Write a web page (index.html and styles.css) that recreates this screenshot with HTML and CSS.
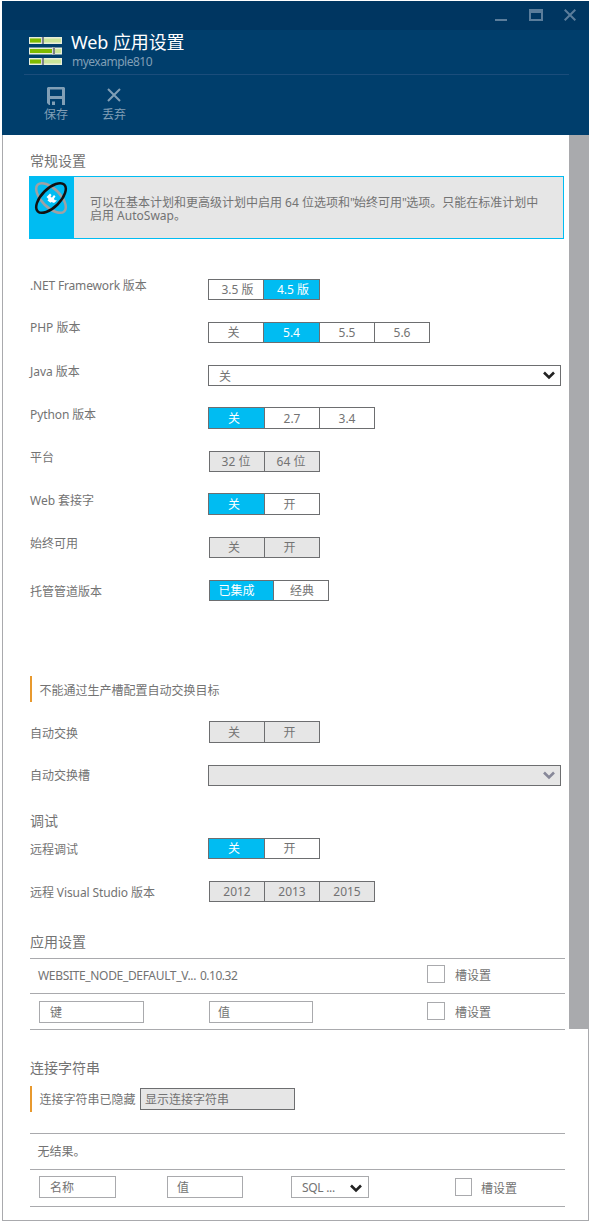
FILE: index.html
```html
<!DOCTYPE html>
<html lang="zh-CN">
<head>
<meta charset="utf-8">
<title>Web 应用设置</title>
<link rel="stylesheet" href="styles.css">
</head>
<body>
<main class="blade">
  <header class="head">
    <div class="titlebar">
      <svg class="winbtn" width="12" height="12" viewBox="0 0 12 12"><path d="M0 10h12v2H0z"/></svg>
      <svg class="winbtn winbtn-max" width="14" height="12" viewBox="0 0 14 12"><path fill-rule="evenodd" d="M0 0h14v12H0zM2 4v6h10V4z"/></svg>
      <svg class="winbtn winbtn-close" width="12" height="12" viewBox="0 0 12 12"><path class="line" d="M.7.7l10.6 10.6M11.3.7L.7 11.3"/></svg>
    </div>
    <div class="heading">
      <svg class="sliders" width="33" height="28" viewBox="0 0 33 28">
        <g fill="#e8eeda"><path d="M0 0h33v7H0zM0 10.500h33v7H0zM0 21h33v7H0z"/></g>
        <g fill="#cbe59a"><path d="M1 1.500h31v4h-31zM1 12h31v4h-31zM1 22.500h31v4h-31z"/></g>
        <g fill="#7fba00"><path d="M1 1.500h11v4h-11zM1 12h22v4h-22zM1 22.500h11v4h-11z"/></g>
        <g fill="#d9dadb"><path d="M12 0h3v7h-3zM23 10.500h3v7h-3zM12 21h3v7h-3z"/></g>
        <g fill="#7c8288"><path d="M13 0h2v7h-2zM24 10.500h2v7h-2zM13 21h2v7h-2z"/></g>
      </svg>
      <div>
        <h1>Web 应用设置</h1>
        <p class="sub">myexample810</p>
      </div>
    </div>
    <nav class="commands">
      <div class="cmd">
        <svg class="save" width="18" height="18" viewBox="0 0 18 18"><path fill-rule="evenodd" d="M1 0h16l1 1v17h-3v-6H3v6H2l-2-2V1zM3 2.500V9h12V2.500z"/><path d="M5 14.500h3V18H5z"/></svg>
        <span>保存</span>
      </div>
      <div class="cmd">
        <svg width="18" height="18" viewBox="0 0 18 18"><path class="line" d="M3 2l12 12M15 2L3 14"/></svg>
        <span>丢弃</span>
      </div>
    </nav>
  </header>

  <div class="body">
    <div class="content">
      <h2 class="h-general">常规设置</h2>
      <div class="banner">
        <div class="banner-icon">
          <svg width="34" height="34" viewBox="0 0 34 34">
            <ellipse class="orbit back" cx="17" cy="17" rx="18.800" ry="9.200" transform="rotate(45 17 17)"/>
            <ellipse class="orbit front" cx="17" cy="17" rx="18.800" ry="9.200" transform="rotate(-45 17 17)"/>
            <path class="core" d="M12.500 16l3.500-3.500 1.500 1.500-1 2 1.500.5 2-2.500 1.500 1.500-1.500 2 .5 1.500 2.500.5-3 2.500-2.500-1-1 .8-3-2.300 1-1.500z"/>
          </svg>
        </div>
        <p>可以在基本计划和更高级计划中启用 64 位选项和<span class="quote">"</span>始终可用<span class="quote">"</span>选项。只能在标准计划中<br>启用 AutoSwap。</p>
      </div>

      <div class="row r-net"><label>.NET Framework 版本</label>
        <div class="seg"><span class="w55 right">3.5 版</span><span class="w56 on right">4.5 版</span></div></div>
      <div class="row r-php"><label>PHP 版本</label>
        <div class="seg"><span class="w55 one">关</span><span class="w56 on">5.4</span><span class="w55">5.5</span><span class="w55">5.6</span></div></div>
      <div class="row r-java"><label>Java 版本</label>
        <div class="select">关<svg class="chev" width="12" height="9" viewBox="0 0 12 9"><path d="M1 1.500l5 5 5-5"/></svg></div></div>
      <div class="row r-python"><label>Python 版本</label>
        <div class="seg tall"><span class="w56 on one">关</span><span class="w55">2.7</span><span class="w55">3.4</span></div></div>
      <div class="row r-platform"><label>平台</label>
        <div class="seg off"><span class="w55 left">32 位</span><span class="w55 left">64 位</span></div></div>
      <div class="row r-web"><label>Web 套接字</label>
        <div class="seg tall"><span class="w56 on one">关</span><span class="w55 one">开</span></div></div>
      <div class="row r-always"><label>始终可用</label>
        <div class="seg off"><span class="w55 one">关</span><span class="w55 one">开</span></div></div>
      <div class="row r-pipe"><label>托管管道版本</label>
        <div class="seg inset"><span class="w64 on">已集成</span><span class="w55 right">经典</span></div></div>

      <p class="note n-swap">不能通过生产槽配置自动交换目标</p>
      <div class="row r-swap"><label>自动交换</label>
        <div class="seg off tall"><span class="w55 one">关</span><span class="w55 one">开</span></div></div>
      <div class="row r-slot"><label>自动交换槽</label>
        <div class="select off"><svg class="chev" width="12" height="9" viewBox="0 0 12 9"><path d="M1 1.500l5 5 5-5"/></svg></div></div>

      <h2 class="h-debug">调试</h2>
      <div class="row r-remote"><label>远程调试</label>
        <div class="seg"><span class="w56 on one">关</span><span class="w55 one">开</span></div></div>
      <div class="row r-vs"><label>远程 Visual Studio 版本</label>
        <div class="seg off"><span class="w55">2012</span><span class="w55">2013</span><span class="w55">2015</span></div></div>

      <h2 class="h-app">应用设置</h2>
      <section class="table app">
        <div class="tr tr-node"><span class="name">WEBSITE_NODE_DEFAULT_V...</span><span class="ver">0.10.32</span><i class="check"></i><span>槽设置</span></div>
        <div class="tr tr-new"><span class="field">键</span><span class="field value">值</span><i class="check"></i><span>槽设置</span></div>
      </section>

      <h2 class="h-conn">连接字符串</h2>
      <p class="note n-conn">连接字符串已隐藏<span class="button">显示连接字符串</span></p>
      <section class="table conn">
        <div class="tr tr-empty">无结果。</div>
        <div class="tr tr-new"><span class="field">名称</span><span class="field value">值</span><span class="field type">SQL ...<svg class="chev" width="12" height="9" viewBox="0 0 12 9"><path d="M1 1.500l5 5 5-5"/></svg></span><i class="check"></i><span>槽设置</span></div>
      </section>
    </div>
    <div class="rail"><div class="thumb"></div></div>
  </div>
</main>
</body>
</html>
```
FILE: styles.css
```css
* { box-sizing: border-box; }
body {
  margin: 0;
  background: #fff;
  color: #737373;
  font: 12px/16px "Noto Sans", "Noto Sans CJK SC", sans-serif;
}
h1, h2, p { margin: 0; font-weight: 400; }
svg { display: block; flex: none; }

.blade { width: 587px; height: 1220px; margin: 1px 1px 0 2px; }

/* Header */
.head { height: 134px; background: #003e6c; color: #819fb6; }
.titlebar { display: flex; height: 29px; padding: 8px 0 0 493px; background: #003661; }
.winbtn { fill: #5b7d9b; }
.winbtn-max { margin-left: 22px; }
.winbtn-close { margin-left: 21px; }
.line { fill: none; stroke: #819fb6; stroke-width: 2; }
.winbtn .line { stroke: #5b7d9b; }
.heading { display: flex; gap: 9px; height: 45px; margin: 0 20px 0 22px; padding: 0 0 0 5px; border-bottom: 1px solid #1b4d7b; }
.sliders { margin-top: 7px; }
h1 { height: 24px; color: #fff; font-size: 18px; line-height: 25px; letter-spacing: -.1px; white-space: nowrap; }
.sub { line-height: 15px; letter-spacing: -.5px; padding-left: 1px; }
.commands { display: flex; padding: 12px 0 0 42px; gap: 34px; }
.cmd { display: grid; justify-items: center; width: 24px; row-gap: 1px; fill: #819fb6; line-height: 18px; white-space: nowrap; }
.save { margin-right: 1px; }

/* Body and scrollbar */
.body { display: flex; height: 1086px; border: solid #a9aaad; border-width: 0 0 1px 1px; }
.content { width: 566px; padding-left: 27px; }
.rail { width: 20px; border-right: 1px solid #a9aaad; }
.thumb { width: 20px; height: 894px; background: #a9aaad; }

h2 { font-size: 14px; line-height: 20px; }
.h-general { padding-top: 16px; height: 41px; }
.banner { display: flex; width: 535px; height: 63px; margin-left: -1px; border: 1px solid #00bcf2; background: #e6e6e6; }
.banner-icon { width: 44px; padding: 4px 0 0 4px; background: #00bcf2; }
.banner p { padding: 19px 0 0 16px; line-height: 13px; white-space: nowrap; }
.quote { letter-spacing: -.8px; }
.orbit { fill: none; stroke-width: 2.500; }
.back { stroke: #a0a1a3; }
.front { stroke: #111; }
.core { fill: #fff; }

/* Setting rows */
.row { display: flex; align-items: flex-start; height: 43px; }
.row label { width: 178px; margin-top: -2px; padding-top: 1px; white-space: nowrap; letter-spacing: -.02px; }
.r-net { margin-top: 40px; }
.r-net label { letter-spacing: -.17px; }
.r-php label { margin-top: -3px; }
.r-java { height: 42px; }
.r-python { height: 44px; }
.r-python label, .r-web label { margin-top: -1px; }
.r-python label { letter-spacing: -.1px; }
.r-platform { height: 42px; }
.r-web { height: 44px; }
.r-pipe { height: 96px; }
.r-pipe label { margin-top: 3px; }
.r-swap { height: 44px; margin-top: 19px; }
.r-swap label { margin-top: 4px; }
.r-slot { height: 46px; }
.r-slot label { margin-top: 2px; }
.r-remote label, .r-vs label { margin-top: 3px; }
.r-vs { height: 51px; }
.r-vs label { letter-spacing: -.1px; }

.seg { display: flex; height: 21px; border: solid #6d6e70; border-width: 1px 1px 1px 0; line-height: 19px; }
.seg.tall { height: 22px; line-height: 21px; }
.r-net .seg, .r-platform .seg, .r-always .seg { line-height: 20px; }
.seg span { border-left: 1px solid #6d6e70; text-align: center; }
.seg.off, .seg.inset { margin-left: 1px; }
.off { background: #e6e6e6; }
.seg .on { background: #00bcf2; color: #fff; }
.w55 { width: 55px; }
.w56 { width: 56px; }
.w64 { width: 64px; padding-right: 10px; }
.seg .one { padding-right: 5px; }
.seg.off .one:first-child { padding-right: 6px; }
.seg .left { padding-right: 2px; }
.seg .right { padding-left: 3px; }
.seg.inset .right { padding-left: 2px; }
.select { display: flex; justify-content: space-between; width: 353px; height: 21px; padding: 0 5px 0 10px; border: 1px solid #6d6e70; line-height: 21px; }
.chev { margin-top: 5px; fill: none; stroke: #222; stroke-width: 2.600; }
.off .chev { margin-left: auto; stroke: #878899; }

/* Notes */
.note { display: flex; height: 26px; padding-left: 7.500px; border-left: 2px solid #e8992e; line-height: 30px; }
.n-conn { line-height: 27px; }
.button { width: 155px; height: 22px; margin: 2px 0 0 4.500px; padding-left: 4px; border: 1px solid #6d6e70; background: #e6e6e6; line-height: 21px; }
.h-debug { height: 27px; }
.h-app { height: 26px; }
.h-conn { height: 28px; margin-top: 28px; }

/* Tables */
.table { width: 535px; border-top: 1px solid #a9aaad; }
.conn { margin-top: 21px; }
.tr { display: flex; height: 36px; border-bottom: 1px solid #a9aaad; }
.tr-node { height: 35px; padding: 6px 0 0 8px; line-height: 22px; }
.name { width: 162px; letter-spacing: -.33px; }
.ver { width: 227px; letter-spacing: -.5px; }
.check { width: 18px; height: 18px; margin-right: 10px; border: 1px solid #a9aaad; }
.tr-new { padding: 7px 0 0 9px; }
.field { display: flex; width: 105px; height: 22px; padding-left: 10px; border: 1px solid #a9aaad; line-height: 21px; }
.app .value { width: 104px; margin: 0 114px 0 65px; padding-left: 8px; }
.app .check { margin-top: 1px; }
.app .tr-node .check { margin-top: 0; }
.tr-new > span:last-child { line-height: 23px; }
.tr-empty { padding-left: 7.500px; line-height: 35px; }
.conn .tr-new { height: 37px; padding-top: 6px; }
.conn .field { width: 77px; line-height: 22px; }
.conn .tr-new > span:last-child { line-height: 25px; }
.conn .value { width: 76px; margin: 0 48px 0 51px; padding-left: 9px; }
.conn .type { width: 78px; margin-right: 86px; padding: 0 6px 0 10px; justify-content: space-between; letter-spacing: -.3px; }
.type .chev { margin-top: 7px; }
.conn .check { width: 17px; margin: 2px 9px 0 0; }
```
